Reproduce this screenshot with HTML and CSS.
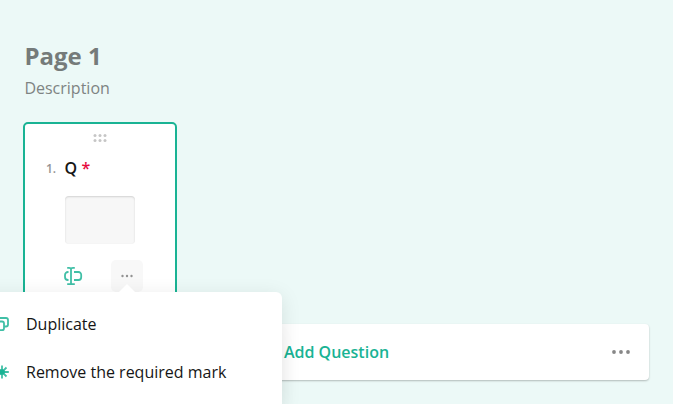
FILE: index.html
```
<!DOCTYPE html>
<html lang="en">
<head>
<meta charset="utf-8">
<title>Survey designer</title>
<link rel="stylesheet" href="styles.css">
</head>
<body>
<main class="page">
  <header class="page-header">
    <h1 class="page-title">Page 1</h1>
    <p class="page-description">Description</p>
  </header>
  <section class="question">
    <svg class="drag" width="14" height="8" viewBox="0 0 14 8"><circle cx="2" cy="1.5" r="1.5"/><circle cx="7" cy="1.5" r="1.5"/><circle cx="12" cy="1.5" r="1.5"/><circle cx="2" cy="6.5" r="1.5"/><circle cx="7" cy="6.5" r="1.5"/><circle cx="12" cy="6.5" r="1.5"/></svg>
    <h2 class="question-title"><span class="number">1.</span><span>Q</span><span class="required">*</span></h2>
    <div class="input"></div>
    <div class="actions">
      <svg class="type-icon" width="20" height="20" viewBox="0 0 20 20"><path d="M5.500 6H5a3 3 0 0 0-3 3v2a3 3 0 0 0 3 3h.5M11 6h4.500a2.700 2.700 0 0 1 2.700 2.700v2.600a2.700 2.700 0 0 1-2.700 2.700H11M8 2.500v15M4.200 1.900h1.800q2 0 2 1.200 0-1.200 2-1.200h1.800M4.200 18.100h1.800q2 0 2-1.200 0 1.200 2 1.200h1.800"/></svg>
      <button class="more" aria-label="More"><svg width="12" height="4" viewBox="0 0 12 4"><circle cx="1.500" cy="2" r="1.200"/><circle cx="6" cy="2" r="1.200"/><circle cx="10.500" cy="2" r="1.200"/></svg></button>
    </div>
  </section>
  <div class="add">
    <span class="add-label">Add Question</span>
    <svg class="add-more" width="18" height="4" viewBox="0 0 18 4"><circle cx="2" cy="2" r="1.900"/><circle cx="9" cy="2" r="1.900"/><circle cx="16" cy="2" r="1.900"/></svg>
  </div>
</main>
<div class="menu">
  <div class="item">
    <svg class="icon" width="24" height="24" viewBox="0 0 24 24"><path d="M12 9V8a2 2 0 0 1 2-2h6a2 2 0 0 1 2 2v4.500a2 2 0 0 1-2 2h-1.500M10 9.500h6a2 2 0 0 1 2 2v4.700a2 2 0 0 1-2 2h-6a2 2 0 0 1-2-2v-4.700a2 2 0 0 1 2-2z"/></svg>
    <span>Duplicate</span>
  </div>
  <div class="item">
    <svg class="icon" width="24" height="24" viewBox="0 0 24 24"><path d="M16 5.500v13M9.500 12h13.300M11.500 7.500l9 9M20.500 7.500l-9 9"/><circle class="core" cx="16" cy="12" r="2.800"/></svg>
    <span>Remove the required mark</span>
  </div>
</div>
</body>
</html>
```
FILE: styles.css
```
* { box-sizing: border-box; }
body {
  margin: 0;
  height: 404px;
  position: relative;
  overflow: hidden;
  background: #ecf9f7;
  font: 16px/24px "Open Sans", sans-serif;
  color: #161616;
}
.page { padding: 40px 24px 0; }
.page-header { height: 82px; padding-left: 0.4px; }
.page-title { margin: 0; font-size: 24px; line-height: 32px; font-weight: 700; color: #757b7a; }
.page-description { margin: 4px 0 0; color: #7e8483; }
.question {
  width: 154px;
  height: 186px;
  margin-left: -1px;
  border: 2px solid #19b394;
  border-radius: 5px;
  background: #fff;
  display: flex;
  flex-direction: column;
}
.drag { display: block; margin: 10px 0 0 68px; fill: #c6c6c6; }
.question-title {
  display: flex;
  align-items: center;
  margin: 14px 0 0;
  padding-left: 21px;
  height: 24px;
  font-size: 16px;
  font-weight: 600;
}
.number { width: 18.500px; padding-top: 1px; font-size: 12px; font-weight: 600; color: #949494; }
.required { margin-left: 4.500px; color: #e60a3e; }
.input {
  width: 70px;
  height: 48px;
  margin: 16px 0 0 40px;
  border-radius: 4px;
  background: #f7f7f7;
  box-shadow: inset 0 1px 2px rgba(0, 0, 0, .15);
}
.actions { display: flex; align-items: center; justify-content: space-between; margin-top: 16px; padding: 0 32px 0 38px; }
.type-icon { fill: none; stroke: #40bfa6; stroke-width: 1.8; }
.more { display: flex; align-items: center; justify-content: center; width: 32px; height: 32px; padding: 0; border: 0; border-radius: 5px; background: #f8f8f8; }
.more svg { fill: #929292; }
.add {
  display: grid;
  grid-template-columns: 1fr auto 1fr;
  align-items: center;
  height: 56px;
  margin-top: 16px;
  padding: 0 19px;
  border-radius: 4px;
  background: #fff;
  box-shadow: 0 1px 2px rgba(0, 0, 0, .25);
}
.add-label { grid-column: 2; color: #19b394; font-weight: 600; }
.add-more { justify-self: end; fill: #878787; }
.menu {
  position: absolute;
  left: -30px;
  top: 292px;
  width: 312px;
  height: 112px;
  padding-top: 8px;
  border-radius: 6px 6px 0 0;
  background: #fff;
  box-shadow: 0 4px 20px rgba(0, 0, 0, .1), 0 40px 20px rgba(0, 0, 0, .03);
}
.menu::before {
  content: "";
  position: absolute;
  left: 149px;
  top: -8px;
  border: 8px solid transparent;
  border-top: 0;
  border-bottom-color: #fff;
}
.item { display: flex; align-items: center; gap: 16px; height: 48px; padding-left: 16px; }
.icon { fill: none; stroke: #40bfa6; stroke-width: 1.8; }
.item .core { fill: #19b394; stroke: none; }
```
